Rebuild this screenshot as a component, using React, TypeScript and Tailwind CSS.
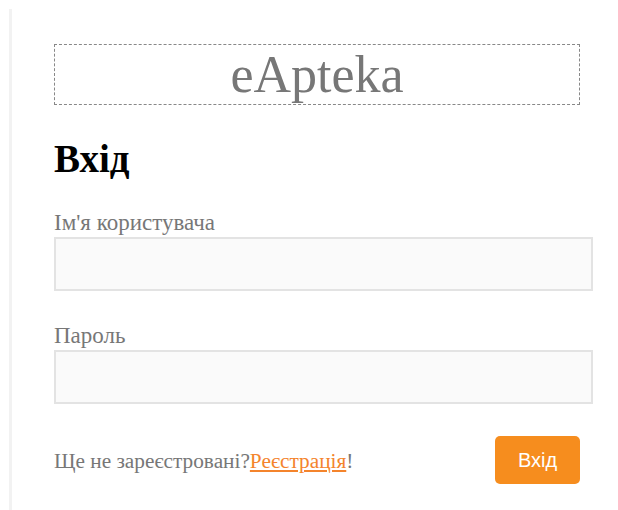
export default function App() {
  return (
    <div className="min-h-[510px] w-[618px] bg-white" style={{ fontFamily: '"Liberation Serif", "Times New Roman", serif' }}>
      <div className="flex pt-[9px]">
        <div className="w-[3px] shrink-0 bg-[#f2f2f2] ml-[9px] min-h-[501px]" />
        <div className="flex-1 pl-[42px] pr-[25px]">
          <div className="mt-[35px] mr-[13px] flex h-[61px] items-center justify-center border border-dashed border-[#888]">
            <span className="text-[52px] leading-none text-[#777]">eApteka</span>
          </div>
          <h1 className="mt-[34px] text-[39px] font-bold leading-none text-black">Вхід</h1>
          <form className="mt-[33px]">
            <label className="block text-[23px] leading-[24px] text-[#777]">Ім'я користувача</label>
            <input type="text" className="mt-[2px] block h-[54px] w-full border-2 border-[#e3e3e3] bg-[#fafafa] outline-none" />
            <label className="mt-[33px] block text-[23px] leading-[24px] text-[#777]">Пароль</label>
            <input type="password" className="mt-[2px] block h-[54px] w-full border-2 border-[#e3e3e3] bg-[#fafafa] outline-none" />
            <div className="mt-[32px] mr-[13px] flex items-center justify-between">
              <p className="pt-[3px] text-[21.3px] text-[#777]">
                Ще не зареєстровані?
                <a href="#" className="text-[#f4842c] underline">Реєстрація</a>!
              </p>
              <button type="button" className="h-[48px] w-[85px] rounded-[5px] bg-[#f68d1e] text-[20px] text-white" style={{ fontFamily: '"Liberation Sans", Arial, sans-serif' }}>
                Вхід
              </button>
            </div>
          </form>
        </div>
      </div>
    </div>
  );
}
